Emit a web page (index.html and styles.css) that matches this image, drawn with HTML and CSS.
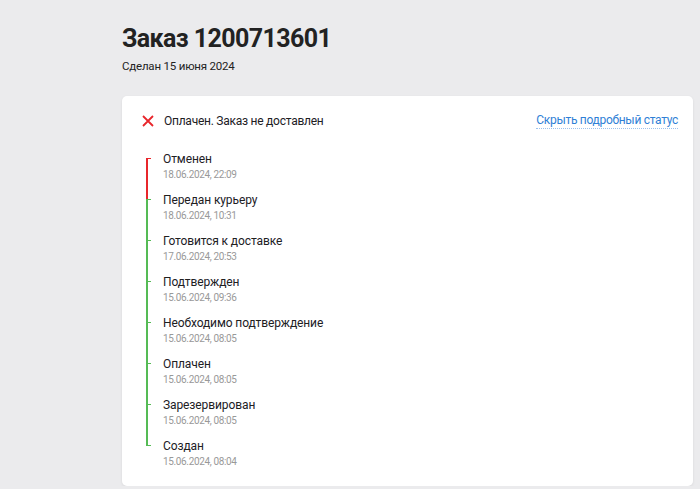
FILE: index.html
```html
<!DOCTYPE html>
<html lang="ru">
<head>
<meta charset="utf-8">
<title>Заказ 1200713601</title>
<link rel="stylesheet" href="styles.css">
</head>
<body>
<div class="page">
  <h1 class="title">Заказ 1200713601</h1>
  <div class="subtitle">Сделан 15 июня 2024</div>
  <div class="card">
    <div class="status-row">
      <div class="status">
        <svg class="x-icon" width="12" height="12" viewBox="0 0 12 12"><path d="M1 1 L11 11 M11 1 L1 11" stroke="#e8262b" stroke-width="1.8" fill="none"/></svg>
        <span>Оплачен. Заказ не доставлен</span>
      </div>
      <a class="link" href="#">Скрыть подробный статус</a>
    </div>
    <div class="timeline">
      <div class="item"><div class="mark red"></div><div class="body"><div class="name">Отменен</div><div class="date">18.06.2024, 22:09</div></div></div>
      <div class="item"><div class="mark"></div><div class="body"><div class="name">Передан курьеру</div><div class="date">18.06.2024, 10:31</div></div></div>
      <div class="item"><div class="mark"></div><div class="body"><div class="name">Готовится к доставке</div><div class="date">17.06.2024, 20:53</div></div></div>
      <div class="item"><div class="mark"></div><div class="body"><div class="name">Подтвержден</div><div class="date">15.06.2024, 09:36</div></div></div>
      <div class="item"><div class="mark"></div><div class="body"><div class="name">Необходимо подтверждение</div><div class="date">15.06.2024, 08:05</div></div></div>
      <div class="item"><div class="mark"></div><div class="body"><div class="name">Оплачен</div><div class="date">15.06.2024, 08:05</div></div></div>
      <div class="item"><div class="mark"></div><div class="body"><div class="name">Зарезервирован</div><div class="date">15.06.2024, 08:05</div></div></div>
      <div class="item"><div class="mark last"></div><div class="body"><div class="name">Создан</div><div class="date">15.06.2024, 08:04</div></div></div>
    </div>
  </div>
</div>
</body>
</html>
```

FILE: styles.css
```css
html, body {
  margin: 0;
  padding: 0;
  background: #ebebed;
  font-family: Roboto, "Noto Sans", sans-serif;
  color: #21201f;
}
.page {
  padding: 22px 7px 0 122px;
}
.title {
  margin: 0;
  font-size: 25px;
  line-height: 34px;
  font-weight: 700;
  color: #222;
  letter-spacing: -0.6px;
}
.subtitle {
  margin-top: 2px;
  font-size: 11.5px;
  line-height: 16px;
  color: #222;
  letter-spacing: -0.2px;
}
.card {
  margin-top: 22px;
  background: #fff;
  border-radius: 5px;
  box-shadow: 0 1px 3px rgba(0,0,0,0.08);
  padding: 15px 15px 10px 20px;
  height: 365px;
}
.status-row {
  display: flex;
  justify-content: space-between;
  align-items: center;
  height: 20px;
}
.status {
  display: flex;
  align-items: center;
  gap: 10px;
  font-size: 12px;
  letter-spacing: -0.25px;
}
.x-icon { display: block; }
.link {
  font-size: 12px;
  color: #2f7fd6;
  text-decoration: none;
  border-bottom: 1px dotted #9cc2ee;
  line-height: 15px;
  letter-spacing: -0.3px;
}
.timeline {
  margin-top: 20px;
  padding-left: 4px;
}
.item {
  display: flex;
  align-items: flex-start;
}
.mark {
  flex: none;
  width: 3px;
  height: 40px;
  margin-top: 7px;
  margin-bottom: -7px;
  border-left: 2px solid #55bb55;
  border-top: 1px solid #55bb55;
  margin-right: 12px;
}
.mark.red {
  border-color: #e8262b;
}
.mark.last {
  height: 0;
  border-left: 0;
  width: 5px;
}
.body {
  padding-bottom: 10px;
}
.name {
  font-size: 12px;
  line-height: 16px;
  letter-spacing: -0.1px;
}
.date {
  font-size: 10px;
  line-height: 15px;
  color: #999;
  letter-spacing: -0.35px;
}
```
